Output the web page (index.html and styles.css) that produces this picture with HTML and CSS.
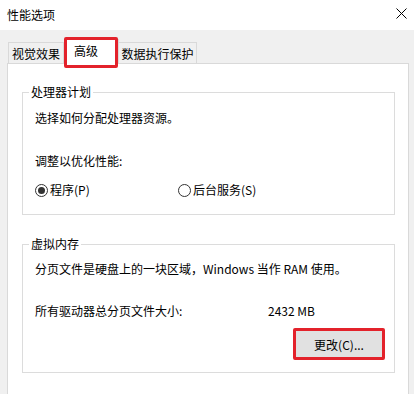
FILE: index.html
```html
<!DOCTYPE html>
<html lang="zh-CN">
<head>
  <meta charset="UTF-8">
  <title>性能选项</title>
  <link rel="stylesheet" href="styles.css">
</head>
<body>
  <div class="titlebar">
    <span class="title">性能选项</span>
    <svg class="close" width="11" height="11" viewBox="0 0 11 11">
      <path d="M0.5 0.5 L10.5 10.5 M10.5 0.5 L0.5 10.5" stroke="#000" stroke-width="1" fill="none"/>
    </svg>
  </div>

  <div class="client">
    <div class="tabs">
      <div class="tab tab-visual">视觉效果</div>
      <div class="tab tab-active">高级</div>
      <div class="tab tab-dep">数据执行保护</div>
    </div>

    <div class="panel">
      <fieldset class="group group-cpu">
        <legend>处理器计划</legend>
        <div class="line">选择如何分配处理器资源。</div>
        <div class="line line-gap">调整以优化性能:</div>
        <div class="radios">
          <label class="radio radio-program"><span class="dot checked"></span>程序(P)</label>
          <label class="radio radio-service"><span class="dot"></span>后台服务(S)</label>
        </div>
      </fieldset>

      <fieldset class="group group-mem">
        <legend>虚拟内存</legend>
        <div class="line">分页文件是硬盘上的一块区域，Windows 当作 RAM 使用。</div>
        <div class="line line-gap size-row">
          <span class="size-label">所有驱动器总分页文件大小:</span>
          <span class="size-value">2432 MB</span>
        </div>
        <div class="actions">
          <button class="change-btn">更改(C)...</button>
        </div>
      </fieldset>
    </div>
  </div>
</body>
</html>
```

FILE: styles.css
```css
html, body {
  margin: 0;
  padding: 0;
}
body {
  width: 414px;
  height: 394px;
  overflow: hidden;
  display: flex;
  flex-direction: column;
  font-family: "Noto Sans CJK SC", "Noto Sans", sans-serif;
  font-size: 12px;
  line-height: 14px;
  color: #000;
  background: #f0f0f0;
}
.titlebar {
  height: 30px;
  background: #fff;
  display: flex;
  align-items: center;
  justify-content: space-between;
  padding: 0 7px 1px 7px;
  box-sizing: border-box;
}
.close {
  margin-top: -2px;
}
.client {
  flex: 1;
  display: flex;
  flex-direction: column;
  padding: 0 5px 0 7px;
}
.tabs {
  display: flex;
  align-items: flex-end;
  height: 33px;
  padding-left: 1px;
  position: relative;
  z-index: 1;
}
.tab {
  height: 21px;
  box-sizing: border-box;
  border: 1px solid #d9d9d9;
  border-bottom: none;
  background: #f0f0f0;
  display: flex;
  align-items: center;
  justify-content: center;
  white-space: nowrap;
}
.tab-visual {
  width: 56px;
  padding-top: 1px;
}
.tab-active {
  width: 55px;
  height: 25px;
  margin-bottom: -1px;
  background: #fff;
  justify-content: flex-start;
  padding-left: 9px;
  padding-bottom: 3px;
  position: relative;
}
.tab-active::after {
  content: "";
  position: absolute;
  left: -1px;
  top: -3px;
  right: 0;
  bottom: -4px;
  border: 3px solid #e3222b;
  border-radius: 2px;
}
.tab-dep {
  width: 78px;
  padding-top: 1px;
  border-left: none;
}
.panel {
  flex: 1;
  background: #fff;
  border: 1px solid #d9d9d9;
  border-bottom: none;
  padding: 0 13px 0 14px;
}
.group {
  margin: 21px 0 0 0;
  padding: 0 0 0 12px;
  border: 1px solid #dcdcdc;
  min-width: 0;
}
.group legend {
  padding: 0 2px;
  margin-left: -6px;
  line-height: 14px;
}
.group-cpu {
  padding-bottom: 17px;
}
.group-mem {
  margin-top: 22px;
  padding-bottom: 12px;
}
.line {
  margin-top: 12px;
  white-space: nowrap;
}
.group-mem .line:first-of-type {
  margin-top: 11px;
}
.line.line-gap {
  margin-top: 29px;
}
.group-mem .line.line-gap {
  margin-top: 28px;
}
.radios {
  display: flex;
  margin-top: 15px;
}
.radio {
  display: flex;
  align-items: center;
  gap: 2px;
}
.radio-program {
  width: 143px;
}
.dot {
  width: 13px;
  height: 13px;
  box-sizing: border-box;
  border: 1px solid #333;
  border-radius: 50%;
  display: flex;
  align-items: center;
  justify-content: center;
}
.dot.checked::before {
  content: "";
  width: 7px;
  height: 7px;
  border-radius: 50%;
  background: #333;
}
.size-row {
  display: flex;
}
.size-label {
  width: 233px;
}
.actions {
  display: flex;
  justify-content: flex-end;
  margin-top: 10px;
  padding-right: 9px;
}
.change-btn {
  width: 92px;
  height: 32px;
  box-sizing: border-box;
  border: 3px solid #e3222b;
  border-radius: 2px;
  background: #e1e1e1;
  font-family: inherit;
  font-size: 12px;
  color: #000;
  padding: 0;
}
```
